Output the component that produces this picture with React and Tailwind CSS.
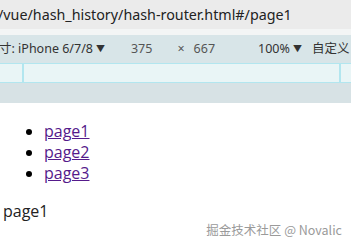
export default function App() {
  const pages = ["page1", "page2", "page3"];

  return (
    <div className="relative w-[351px] h-[248px] overflow-hidden bg-white font-['Noto_Sans','Noto_Sans_CJK_SC',sans-serif]">
      {/* address bar */}
      <div className="h-[29px] bg-[#ebebeb] flex items-center text-[14.3px] text-[#222] whitespace-nowrap -ml-[2px]">
        /vue/hash_history/hash-router.html#/page1
      </div>
      <div className="h-[6px] bg-[#f3f5f5]" />

      {/* device toolbar */}
      <div className="h-[28px] bg-[#d8e5e8] flex items-center text-[12.5px] text-[#333] whitespace-nowrap">
        <span className="-ml-[1px]">寸: iPhone 6/7/8</span>
        <span className="ml-[3px] text-[9px]">▼</span>
        <span className="ml-[26px] text-[#555]">375</span>
        <span className="ml-[25px] text-[#555]">×</span>
        <span className="ml-[9px] text-[#555]">667</span>
        <span className="ml-[43px]">100%</span>
        <span className="ml-[3px] text-[9px]">▼</span>
        <span className="ml-[10px]">自定义</span>
      </div>

      {/* ruler */}
      <div className="h-[20px] bg-[#e9f5f6] border-y border-[#b2e6ef] flex">
        <div className="w-[22px]" />
        <div className="w-[319px] border-x-2 border-[#b2e6ef]" />
      </div>
      <div className="h-[20px] bg-[#d7e2e5]" />

      {/* page content */}
      <div className="font-['Open_Sans','Noto_Sans_CJK_SC',sans-serif] text-[16px] leading-[21px] text-black">
        <ul className="list-disc pl-[44px] mt-[18px]">
          {pages.map((p) => (
            <li key={p}>
              <a href={`#/${p}`} className="text-[#551a8b] underline">
                {p}
              </a>
            </li>
          ))}
        </ul>
        <p className="mt-[17px] pl-[3px] text-[#222]">page1</p>
      </div>

      <div className="absolute right-[9px] bottom-[8px] text-[12.5px] text-[#9a9a9a] font-['Noto_Sans_CJK_SC',sans-serif]">
        掘金技术社区 @ Novalic
      </div>
    </div>
  );
}
